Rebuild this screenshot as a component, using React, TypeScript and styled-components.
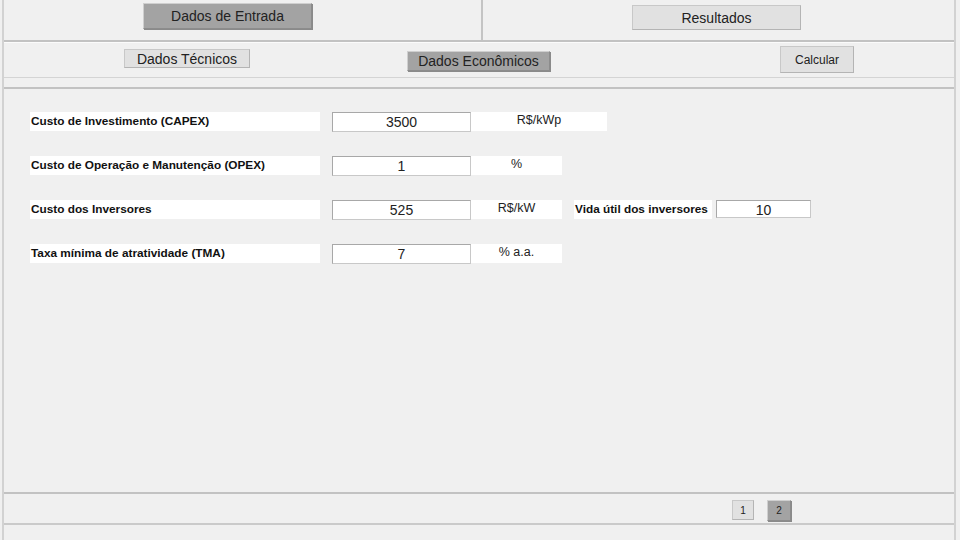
import React from "react";
import styled, { createGlobalStyle } from "styled-components";

const Global = createGlobalStyle`
  html, body { margin: 0; padding: 0; background: #f0f0f0; }
  body { font-family: "Liberation Sans", Arial, sans-serif; color: #1e1e1e; }
`;

const Frame = styled.div`
  margin-left: 2px;
  width: 950px;
  height: 540px;
  border-left: 2px solid #d2d2d2;
  border-right: 2px solid #d2d2d2;
  display: flex;
  flex-direction: column;
  background: #f0f0f0;
`;

const TopBar = styled.div`
  height: 40px;
  display: grid;
  grid-template-columns: 477px 2px 1fr;
`;

const TabCell = styled.div<{ $pl: number; $pt: number }>`
  padding-left: ${(p) => p.$pl}px;
  padding-top: ${(p) => p.$pt}px;
`;

const VDivider = styled.div`
  background: #c4c4c4;
`;

const Btn = styled.div<{ $w: number; $h: number; $dark?: boolean; $size: number }>`
  width: ${(p) => p.$w}px;
  height: ${(p) => p.$h}px;
  box-sizing: border-box;
  display: flex;
  align-items: center;
  justify-content: center;
  font-size: ${(p) => p.$size}px;
  color: #222;
  background: ${(p) => (p.$dark ? "#a3a3a3" : "#e1e1e1")};
  border: 1px solid ${(p) => (p.$dark ? "#8c8c8c" : "#b4b4b4")};
  border-top-color: ${(p) => (p.$dark ? "#cfcfcf" : "#c8c8c8")};
  border-left-color: ${(p) => (p.$dark ? "#cfcfcf" : "#c8c8c8")};
  ${(p) => (p.$dark ? "box-shadow: 1px 1px 0 #8a8a8a;" : "")}
  white-space: nowrap;
`;

const HLine = styled.div<{ $h: number; $c: string }>`
  height: ${(p) => p.$h}px;
  background: ${(p) => p.$c};
  flex: none;
`;

const SubBar = styled.div`
  height: 34px;
  display: flex;
  align-items: flex-start;
`;

const Slot = styled.div<{ $ml: number; $mt: number }>`
  margin-left: ${(p) => p.$ml}px;
  margin-top: ${(p) => p.$mt}px;
`;

const Gap = styled.div<{ $h: number }>`
  height: ${(p) => p.$h}px;
  flex: none;
`;

const Content = styled.div`
  height: 380px;
  padding: 23px 0 0 26px;
  display: flex;
  flex-direction: column;
  gap: 24px;
`;

const Row = styled.div`
  display: flex;
  align-items: flex-start;
  height: 20px;
`;

const Label = styled.div<{ $w: number; $ml?: number }>`
  width: ${(p) => p.$w}px;
  margin-left: ${(p) => p.$ml ?? 0}px;
  height: 19px;
  background: #fff;
  font-size: 11.8px;
  font-weight: bold;
  color: #111;
  padding-left: 1px;
  box-sizing: border-box;
  line-height: 18px;
  white-space: nowrap;
`;

const Input = styled.div<{ $w: number; $ml: number; $h?: number }>`
  width: ${(p) => p.$w}px;
  height: ${(p) => p.$h ?? 20}px;
  margin-left: ${(p) => p.$ml}px;
  box-sizing: border-box;
  background: #fff;
  border: 1px solid #a8a8a8;
  border-bottom-color: #c8c8c8;
  border-right-color: #c8c8c8;
  font-size: 14px;
  text-align: center;
  line-height: 19px;
  color: #222;
`;

const Unit = styled.div<{ $w: number }>`
  width: ${(p) => p.$w}px;
  height: 19px;
  background: #fff;
  font-size: 12.5px;
  text-align: center;
  line-height: 16px;
  color: #222;
`;

const BottomBar = styled.div`
  height: 29px;
  display: flex;
  align-items: flex-start;
  padding-left: 728px;
  padding-top: 6px;
  box-sizing: border-box;
  gap: 13px;
`;

const PageBtn = styled(Btn)`
  font-size: 10px;
`;

export default function App() {
  return (
    <>
      <Global />
      <Frame>
        <TopBar>
          <TabCell $pl={139} $pt={3}>
            <Btn $w={169} $h={26} $dark $size={14}>Dados de Entrada</Btn>
          </TabCell>
          <VDivider />
          <TabCell $pl={149} $pt={5}>
            <Btn $w={169} $h={25} $size={14}>Resultados</Btn>
          </TabCell>
        </TopBar>
        <HLine $h={2} $c="#c2c2c2" />
        <HLine $h={1} $c="#fbfbfb" />
        <SubBar>
          <Slot $ml={120} $mt={6}>
            <Btn $w={126} $h={19} $size={14}>Dados Técnicos</Btn>
          </Slot>
          <Slot $ml={157} $mt={8}>
            <Btn $w={143} $h={20} $dark $size={14}>Dados Econômicos</Btn>
          </Slot>
          <Slot $ml={230} $mt={3}>
            <Btn $w={74} $h={27} $size={12}>Calcular</Btn>
          </Slot>
        </SubBar>
        <HLine $h={1} $c="#d4d4d4" />
        <Gap $h={9} />
        <HLine $h={2} $c="#c2c2c2" />
        <Content>
          <Row>
            <Label $w={290}>Custo de Investimento (CAPEX)</Label>
            <Input $w={139} $ml={12}>3500</Input>
            <Unit $w={136}>R$/kWp</Unit>
          </Row>
          <Row>
            <Label $w={290}>Custo de Operação e Manutenção (OPEX)</Label>
            <Input $w={139} $ml={12}>1</Input>
            <Unit $w={91}>%</Unit>
          </Row>
          <Row>
            <Label $w={290}>Custo dos Inversores</Label>
            <Input $w={139} $ml={12}>525</Input>
            <Unit $w={91}>R$/kW</Unit>
            <Label $w={138} $ml={12}>Vida útil dos inversores</Label>
            <Input $w={95} $ml={4} $h={18}>10</Input>
          </Row>
          <Row>
            <Label $w={290}>Taxa mínima de atratividade (TMA)</Label>
            <Input $w={139} $ml={12}>7</Input>
            <Unit $w={91}>% a.a.</Unit>
          </Row>
        </Content>
        <HLine $h={2} $c="#c2c2c2" />
        <BottomBar>
          <PageBtn $w={22} $h={20} $size={10}>1</PageBtn>
          <PageBtn $w={24} $h={21} $dark $size={10}>2</PageBtn>
        </BottomBar>
        <HLine $h={2} $c="#cacaca" />
      </Frame>
    </>
  );
}
